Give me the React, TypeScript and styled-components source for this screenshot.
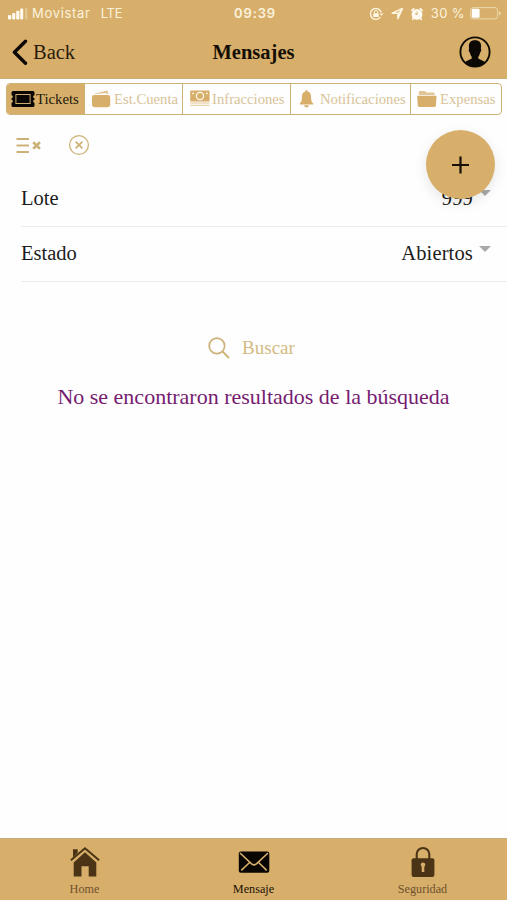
import React from "react";
import styled, { createGlobalStyle } from "styled-components";

const gold = "#d7af6b";
const line = "#cdb277";

const Global = createGlobalStyle`
  * { box-sizing: border-box; }
  body { margin: 0; background: #fefefe; }
`;

const Screen = styled.div`
  position: relative;
  display: flex;
  flex-direction: column;
  width: 507px;
  height: 900px;
  overflow: hidden;
  background: #fefefe;
  color: #1c1c1c;
  font-family: "Liberation Serif", "Times New Roman", serif;
  svg { display: block; flex: none; }
`;

const Header = styled.header`
  height: 79px;
  background: ${gold};
  border-bottom: 1px solid #cfad72;
`;

const StatusBar = styled.div`
  display: grid;
  grid-template-columns: 1fr auto 1fr;
  align-items: center;
  height: 27px;
  padding: 0 6px 0 8px;
  color: #fbf2dc;
  font: 400 13px/27px Inter, "Liberation Sans", sans-serif;
`;

const StatusGroup = styled.div<{ $end?: boolean }>`
  display: flex;
  align-items: center;
  justify-content: ${(p) => (p.$end ? "flex-end" : "flex-start")};
`;

const StatusText = styled.span<{ $spacing?: number; $left?: number }>`
  letter-spacing: ${(p) => p.$spacing ?? 0}px;
  margin-left: ${(p) => p.$left ?? 0}px;
  white-space: nowrap;
`;

const Clock = styled.span`
  font-weight: 600;
  letter-spacing: 0.9px;
  padding-left: 1px;
`;

const NavBar = styled.div`
  display: grid;
  grid-template-columns: 1fr auto 1fr;
  align-items: center;
  height: 50px;
  padding: 0 16px 0 12px;
`;

const BackButton = styled.button`
  display: flex;
  align-items: center;
  gap: 5px;
  padding: 0;
  border: 0;
  background: none;
  color: #2a1c0c;
  font: 20.5px/24px "Liberation Serif", serif;
`;

const Title = styled.h1`
  margin: 0;
  padding-left: 4px;
  color: #150e05;
  font-size: 20.5px;
  line-height: 24px;
`;

const Profile = styled.div`
  justify-self: end;
`;

const Tabs = styled.nav`
  display: grid;
  grid-template-columns: 78px 98px 108px 120px 90px;
  width: 496px;
  height: 32px;
  margin: 4px 0 0 6px;
  border: 1px solid ${line};
  border-radius: 4px;
  overflow: hidden;
`;

const Tab = styled.button<{ $active?: boolean; $gap: number; $pad: number }>`
  display: flex;
  align-items: center;
  gap: ${(p) => p.$gap}px;
  padding: 0 0 1px ${(p) => p.$pad}px;
  border: 0;
  border-right: 1px solid ${line};
  background: ${(p) => (p.$active ? gold : "transparent")};
  color: ${(p) => (p.$active ? "#21170a" : "#d8c398")};
  font: 14.7px/20px "Liberation Serif", serif;
  white-space: nowrap;
  &:last-child { border-right: 0; }
`;

const Tools = styled.div`
  display: flex;
  align-items: center;
  gap: 26px;
  height: 56px;
  padding: 4px 0 0 16px;
`;

const Field = styled.div`
  display: flex;
  align-items: center;
  justify-content: space-between;
  height: 55.5px;
  margin-left: 21px;
  padding: 0 16px 1px 0;
  border-bottom: 1px solid #ececec;
  font-size: 20.5px;
  line-height: 24px;
`;

const FieldValue = styled.span`
  display: flex;
  align-items: center;
  gap: 6px;
  letter-spacing: 0.15px;
`;

const Caret = styled.span`
  width: 0;
  height: 0;
  margin-top: -9px;
  border: 6px solid transparent;
  border-top-color: #a9a9a9;
  border-bottom: 0;
`;

const SearchButton = styled.button`
  display: flex;
  align-items: center;
  align-self: center;
  gap: 12px;
  height: 30px;
  margin: 51px 0 0 -4px;
  padding: 0;
  border: 0;
  background: none;
  color: #d3bb82;
  font: 19px/24px "Liberation Serif", serif;
`;

const Message = styled.p`
  margin: 21px 0 0;
  text-align: center;
  color: #761c70;
  font-size: 22px;
  line-height: 26px;
  white-space: nowrap;
`;

const AddButton = styled.button`
  position: absolute;
  top: 130px;
  left: 426px;
  display: grid;
  place-items: center;
  width: 69px;
  height: 69px;
  padding: 0;
  border: 0;
  border-radius: 50%;
  background: ${gold};
  box-shadow: 0 4px 13px rgba(0, 0, 0, 0.1);
`;

const Footer = styled.footer`
  display: grid;
  grid-template-columns: repeat(3, 1fr);
  height: 62px;
  margin-top: auto;
  border-top: 1px solid #c8ab78;
  background: ${gold};
`;

const FooterItem = styled.a<{ $active?: boolean }>`
  display: flex;
  flex-direction: column;
  align-items: center;
  padding-top: 7px;
  color: ${(p) => (p.$active ? "#1b1206" : "#6f4f2b")};
  font-size: 12.2px;
  line-height: 16px;
  svg { margin-bottom: 3px; }
`;

const SignalIcon = () => (
  <svg width="20" height="12" viewBox="0 0 20 12" fill="#fffaf0">
    <rect x="0" y="7" width="3.2" height="4.5" rx="1" />
    <rect x="4.1" y="5" width="3.2" height="6.5" rx="1" />
    <rect x="8.2" y="2.7" width="3.2" height="8.8" rx="1" />
    <rect x="12.2" y=".6" width="3" height="10.9" rx="1" />
    <rect x="17" y="0" width="2.4" height="11.5" rx="1" opacity=".3" />
  </svg>
);

const RotationLockIcon = () => (
  <svg width="15" height="14" viewBox="0 0 15 14" fill="none" stroke="#fff6e2">
    <path d="M12.2 5.4A5.5 5.5 0 1 0 11.5 10" strokeWidth="1.3" />
    <path d="m10.4 6.4 2.2 2.3 2-2.3z" fill="#fff6e2" stroke="none" />
    <rect x="4.2" y="6.2" width="5.6" height="3.8" rx=".5" fill="#fff6e2" stroke="none" />
    <path d="M5.4 6.4V5a1.6 1.6 0 0 1 3.2 0v1.4" />
  </svg>
);

const LocationIcon = () => (
  <svg width="13" height="13" viewBox="0 0 13 13" fill="none" stroke="#fff6e2" strokeWidth="1.4" strokeLinejoin="round">
    <path d="M1.2 6.2 11.5 1.4 6.9 11.6V6.3z" />
    <path d="m6.9 6.2 4.2-4.4-4.2 8z" fill="#fff6e2" strokeWidth=".5" />
  </svg>
);

const AlarmIcon = () => (
  <svg width="14" height="14" viewBox="0 0 14 14" fill="none" stroke="#fffaf0">
    <circle cx="7" cy="7.4" r="5.4" fill="#fffaf0" stroke="none" />
    <path d="M1.7 3.5 3.8 1.7M10.2 1.7l2.1 1.8M3.4 11.500l-.7.8m7.900-.8.7.8" strokeWidth="1.6" strokeLinecap="round" />
    <path d="M7 7.900V4.600M7 7.800 5 6.400" stroke={gold} strokeWidth="1" />
  </svg>
);

const BatteryIcon = () => (
  <svg width="31" height="13" viewBox="0 0 31 13">
    <rect x=".6" y=".6" width="27" height="11.3" rx="2.6" fill="none" stroke="#ecd8ad" />
    <rect x="1.8" y="1.8" width="7.8" height="8.9" rx="1.3" fill="#fff" />
    <path d="M29 4.3q1.8.5 1.8 2T29 8.3z" fill="#ecd8ad" />
  </svg>
);

const BackIcon = () => (
  <svg width="16" height="27" viewBox="0 0 16 27" fill="none" stroke="#0c0804" strokeWidth="3.4" strokeLinecap="round" strokeLinejoin="round">
    <path d="M13.5 2.3 2.4 13.2l11.1 11.1" />
  </svg>
);

const ProfileIcon = () => (
  <svg width="32" height="32" viewBox="0 0 32 32">
    <circle cx="16" cy="16" r="14.6" fill="none" stroke="#100b04" strokeWidth="1.9" />
    <path d="M16 4.3c-4.4 0-6.3 2.6-6.1 6.5l.3 1.7c-.8.2-.4 3.7.7 4.1.3 2 1 3.3 1.8 4.2v1.8c-1.2 1.4-5.4 1.5-7.2 4.5A14 14 0 0 0 16 30a14 14 0 0 0 10.5-2.9c-1.8-3-6-3.1-7.2-4.5v-1.8c.8-.9 1.5-2.2 1.8-4.2 1.1-.4 1.5-3.9.7-4.1l.3-1.7c.2-3.9-1.7-6.5-6.1-6.5z" fill="#0c0804" />
  </svg>
);

const TicketIcon = () => (
  <svg width="24" height="16" viewBox="0 0 24 16" fill="#090603">
    <path d="M2 0h20q1.5 0 1.5 1.5v2.8q-1.4.2-1.4 1.5t1.4 1.4v1.6q-1.4.1-1.4 1.4t1.4 1.5v2.8q0 1.5-1.5 1.5H2Q.5 16 .5 14.5v-2.8q1.4-.2 1.4-1.5T.5 8.8V7.2q1.4-.1 1.4-1.4T.5 4.3V1.5Q.5 0 2 0z" />
    <rect x="4.9" y="3.5" width="14.2" height="9" fill="none" stroke="#cda96d" strokeWidth="1" />
  </svg>
);

const WalletIcon = () => (
  <svg width="19" height="18" viewBox="0 0 19 18" fill={gold}>
    <path d="M1.5 4.1 15.3.5l1.1 3.6z" opacity=".8" />
    <path d="m3 4.4 12-1.1" stroke="#fefefe" strokeWidth=".8" />
    <rect x="0" y="5" width="18.2" height="12.2" rx="2.4" />
  </svg>
);

const MoneyIcon = () => (
  <svg width="20" height="17" viewBox="0 0 20 17" fill={gold}>
    <rect x=".2" y=".6" width="19.4" height="10.8" rx=".8" />
    <circle cx="10" cy="6" r="3.6" fill="none" stroke="#fffaf0" strokeWidth="1.2" />
    <circle cx="3.1" cy="3.4" r=".9" fill="#fffaf0" />
    <circle cx="16.9" cy="3.4" r=".9" fill="#fffaf0" />
    <path d="M.2 12.4h19.4v1.1H.2zM.2 14.7h19.4v1.1H.2z" opacity=".7" />
  </svg>
);

const BellIcon = () => (
  <svg width="15" height="18" viewBox="0 0 15 18" fill={gold}>
    <path d="M7.5 0q1.2 0 1.2 1.5c2.6.7 3.4 3 3.4 5.5 0 3.8.5 5.5 2.2 6.5v1H.7v-1C2.4 12.500 2.900 10.800 2.900 7c0-2.500.8-4.800 3.400-5.500Q6.300 0 7.500 0zM5 15.300h5Q9.500 17.500 7.500 17.500T5 15.300z" />
  </svg>
);

const FolderIcon = () => (
  <svg width="20" height="18" viewBox="0 0 20 18" fill={gold}>
    <path d="M1.800 5V2.100Q1.800 1 3 1h5l1.300 1.500h7q1.300 0 1.300 1.200V5z" opacity=".72" />
    <path d="M.2 5.700h19.300l-.6 9.900q-.1 1.400-1.500 1.400H2.300Q.9 17 .8 15.600z" />
  </svg>
);

const ClearListIcon = () => (
  <svg width="26" height="17" viewBox="0 0 26 17" fill="none" stroke={line} strokeWidth="2.1">
    <path d="M.5 2h12.500M.5 8.500h12.500M.5 15h12.500" />
    <path d="m17.200 5.200 6.700 6.500m0-6.500-6.700 6.500" strokeWidth="2.600" />
  </svg>
);

const CancelIcon = () => (
  <svg width="22" height="22" viewBox="0 0 22 22" fill="none" stroke={line} strokeWidth="1.300">
    <circle cx="11" cy="11" r="9.400" />
    <path d="m7.600 7.600 6.800 6.800m0-6.800-6.800 6.800" strokeWidth="1.700" />
  </svg>
);

const SearchIcon = () => (
  <svg width="22" height="22" viewBox="0 0 22 22" fill="none" stroke={line} strokeWidth="1.700">
    <circle cx="8.900" cy="8.900" r="7.700" />
    <path d="m14.400 14.400 6.600 6.600" strokeWidth="1.900" />
  </svg>
);

const PlusIcon = () => (
  <svg width="18" height="18" viewBox="0 0 18 18" fill="none" stroke="#171006" strokeWidth="2.200">
    <path d="M8.500 .5v17M0 9h17" />
  </svg>
);

const HomeIcon = () => (
  <svg width="30" height="32" viewBox="0 0 30 32" fill="#4a3415">
    <path d="M3 3.300h4.700v3.500L3 11.400zM15 6.200l11.300 10.200v14H18.700V20.300h-7.200v10.100H3.700v-14z" />
    <path d="M.9 14.300 15 2.200l14.100 12.100" fill="none" stroke="#4a3415" strokeWidth="2" />
  </svg>
);

const MailIcon = () => (
  <svg width="32" height="32" viewBox="0 0 32 32">
    <rect x=".8" y="5.500" width="30.500" height="21.200" rx="2" fill="#080502" />
    <path d="m2 7 11.300 10.700q2.700 2.300 5.400 0L30 7M3.300 24.300l8.300-7.800m9 0 8.100 7.800" fill="none" stroke={gold} strokeWidth="1.600" />
  </svg>
);

const LockIcon = () => (
  <svg width="24" height="32" viewBox="0 0 24 32">
    <path d="M5.700 13V8.300a6.300 6.300 0 0 1 12.600 0V13" fill="none" stroke="#4a3415" strokeWidth="2.100" />
    <rect x=".6" y="12.300" width="22.800" height="18.600" rx="2" fill="#4a3415" />
    <path d="M12 16.500a2.300 2.300 0 0 1 1.300 4.200v5.400h-2.600v-5.400A2.300 2.300 0 0 1 12 16.500z" fill={gold} />
  </svg>
);

export default function App() {
  return (
    <Screen>
      <Global />
      <Header>
        <StatusBar>
          <StatusGroup>
            <SignalIcon />
            <StatusText $spacing={0.7} $left={4}>Movistar</StatusText>
            <StatusText $spacing={-0.2} $left={10}>LTE</StatusText>
          </StatusGroup>
          <Clock>09:39</Clock>
          <StatusGroup $end>
            <RotationLockIcon />
            <StatusText $left={7}><LocationIcon /></StatusText>
            <StatusText $left={6}><AlarmIcon /></StatusText>
            <StatusText $spacing={0.4} $left={7}>30 %</StatusText>
            <StatusText $left={5}><BatteryIcon /></StatusText>
          </StatusGroup>
        </StatusBar>
        <NavBar>
          <BackButton><BackIcon />Back</BackButton>
          <Title>Mensajes</Title>
          <Profile><ProfileIcon /></Profile>
        </NavBar>
      </Header>
      <Tabs>
        <Tab $active $pad={4} $gap={1}><TicketIcon />Tickets</Tab>
        <Tab $pad={7} $gap={3}><WalletIcon />Est.Cuenta</Tab>
        <Tab $pad={7} $gap={2}><MoneyIcon />Infracciones</Tab>
        <Tab $pad={8} $gap={6}><BellIcon />Notificaciones</Tab>
        <Tab $pad={6} $gap={3}><FolderIcon />Expensas</Tab>
      </Tabs>
      <Tools>
        <ClearListIcon />
        <CancelIcon />
      </Tools>
      <Field>
        <span>Lote</span>
        <FieldValue>999<Caret /></FieldValue>
      </Field>
      <Field>
        <span>Estado</span>
        <FieldValue>Abiertos<Caret /></FieldValue>
      </Field>
      <SearchButton><SearchIcon />Buscar</SearchButton>
      <Message>No se encontraron resultados de la búsqueda</Message>
      <AddButton aria-label="Agregar"><PlusIcon /></AddButton>
      <Footer>
        <FooterItem><HomeIcon />Home</FooterItem>
        <FooterItem $active><MailIcon />Mensaje</FooterItem>
        <FooterItem><LockIcon />Seguridad</FooterItem>
      </Footer>
    </Screen>
  );
}
